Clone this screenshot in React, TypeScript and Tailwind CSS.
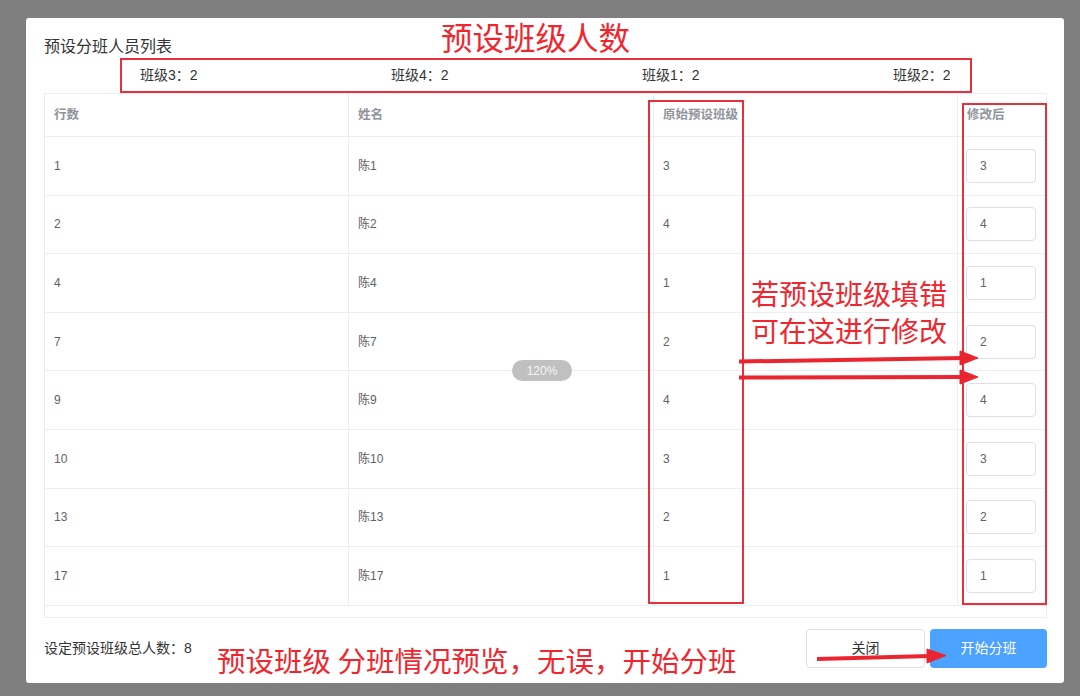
import React from "react";

const classCounts = ["班级3：2", "班级4：2", "班级1：2", "班级2：2"];

const rows = [
  { no: "1", name: "陈1", cls: "3" },
  { no: "2", name: "陈2", cls: "4" },
  { no: "4", name: "陈4", cls: "1" },
  { no: "7", name: "陈7", cls: "2" },
  { no: "9", name: "陈9", cls: "4" },
  { no: "10", name: "陈10", cls: "3" },
  { no: "13", name: "陈13", cls: "2" },
  { no: "17", name: "陈17", cls: "1" },
];

const font = {
  fontFamily: '"Liberation Sans", "Noto Sans CJK SC", sans-serif',
};
const cjk = { fontFamily: '"Noto Sans CJK SC", "Liberation Sans", sans-serif' };

export default function App() {
  return (
    <div
      className="relative h-[696px] w-[1080px] overflow-hidden bg-[#7f7f7f] pl-[26px] pt-[18px]"
      style={font}
    >
      {/* Dialog */}
      <div className="h-[665px] w-[1038px] rounded-[3px] bg-white pl-[18px] pr-[17px] pt-[19px]">
        <div className="h-[18px] pt-[1px] text-[16px] leading-[18px] text-[#333]">
          预设分班人员列表
        </div>

        {/* class counts */}
        <div className="ml-[96px] grid h-[38px] grid-cols-[251px_251px_251px_251px] items-center pt-[2px] text-[14px] text-[#333]">
          {classCounts.map((c) => (
            <span key={c}>{c}</span>
          ))}
        </div>

        {/* Table */}
        <div className="w-[1003px] border border-[#ebeef5] text-[12px]">
          <div className="grid h-[43px] grid-cols-[304px_305px_304px_1fr] text-[12.5px] font-semibold text-[#909399]">
            <div className="flex items-center border-r border-b border-[#ebeef5] pl-[9px]">行数</div>
            <div className="flex items-center border-r border-b border-[#ebeef5] pl-[9px]">姓名</div>
            <div className="flex items-center border-r border-b border-[#ebeef5] pl-[9px]">原始预设班级</div>
            <div className="flex items-center border-b border-[#ebeef5] pl-[9px]">修改后</div>
          </div>
          {rows.map((r) => (
            <div
              key={r.no}
              className="grid h-[58.6px] grid-cols-[304px_305px_304px_1fr] text-[#606266]"
            >
              <div className="flex items-center border-r border-b border-[#ebeef5] pl-[9px]">{r.no}</div>
              <div className="flex items-center border-r border-b border-[#ebeef5] pl-[9px]">{r.name}</div>
              <div className="flex items-center border-r border-b border-[#ebeef5] pl-[9px]">{r.cls}</div>
              <div className="flex items-center border-b border-[#ebeef5] pl-[8px]">
                <div className="flex h-[34px] w-[70px] items-center rounded-[4px] border border-[#dcdfe6] pl-[13px]">
                  {r.cls}
                </div>
              </div>
            </div>
          ))}
          <div className="h-[11px]" />
        </div>

        {/* Footer */}
        <div className="mt-[11px] flex items-center justify-between">
          <span className="text-[14px] text-[#333]">设定预设班级总人数：8</span>
          <div className="flex gap-[5px]">
            <button className="h-[39px] w-[119px] rounded-[4px] border border-[#dcdfe6] bg-white text-[14px] text-[#333]">
              关闭
            </button>
            <button className="h-[39px] w-[117px] rounded-[4px] bg-[#4ba2ff] text-[14px] text-white">
              开始分班
            </button>
          </div>
        </div>
      </div>

      {/* zoom pill */}
      <div className="absolute left-[512px] top-[360px] flex h-[21px] w-[60px] items-center justify-center rounded-full bg-[#c0c0c0] text-[12px] font-medium text-[#f4f4f4]">
        120%
      </div>

      {/* Annotations */}
      <div className="pointer-events-none absolute left-[120px] top-[58px] h-[35px] w-[852px] border-2 border-[#e8303a]" />
      <div className="pointer-events-none absolute left-[648px] top-[100px] h-[504px] w-[96px] border-2 border-[#e8303a]" />
      <div className="pointer-events-none absolute left-[962px] top-[103px] h-[502px] w-[85px] border-2 border-[#e8303a]" />

      <div
        className="absolute left-[441px] top-[16px] text-[31.5px] leading-[40px] text-[#f0262f]"
        style={cjk}
      >
        预设班级人数
      </div>
      <div
        className="absolute left-[751px] top-[275px] text-[28px] leading-[37px] text-[#f0262f]"
        style={cjk}
      >
        <div>若预设班级填错</div>
        <div>可在这进行修改</div>
      </div>
      <div
        className="absolute left-[217px] top-[641px] text-[28.5px] leading-[38px] text-[#f0262f]"
        style={cjk}
      >
        预设班级 分班情况预览，无误，开始分班
      </div>

      <svg
        className="pointer-events-none absolute left-0 top-0"
        width="1080"
        height="696"
        viewBox="0 0 1080 696"
      >
        <g fill="#eb2530" stroke="#eb2530">
          <line x1="739" y1="361.5" x2="964" y2="358" strokeWidth="4" />
          <polygon points="960,351 978,358 960,365" strokeWidth="1" />
          <line x1="739" y1="377.5" x2="964" y2="377" strokeWidth="4" />
          <polygon points="960,370 978,377 960,384" strokeWidth="1" />
          <line x1="817" y1="659" x2="930" y2="656" strokeWidth="4" />
          <polygon points="927,649 946,655.5 927,663" strokeWidth="1" />
        </g>
      </svg>
    </div>
  );
}
